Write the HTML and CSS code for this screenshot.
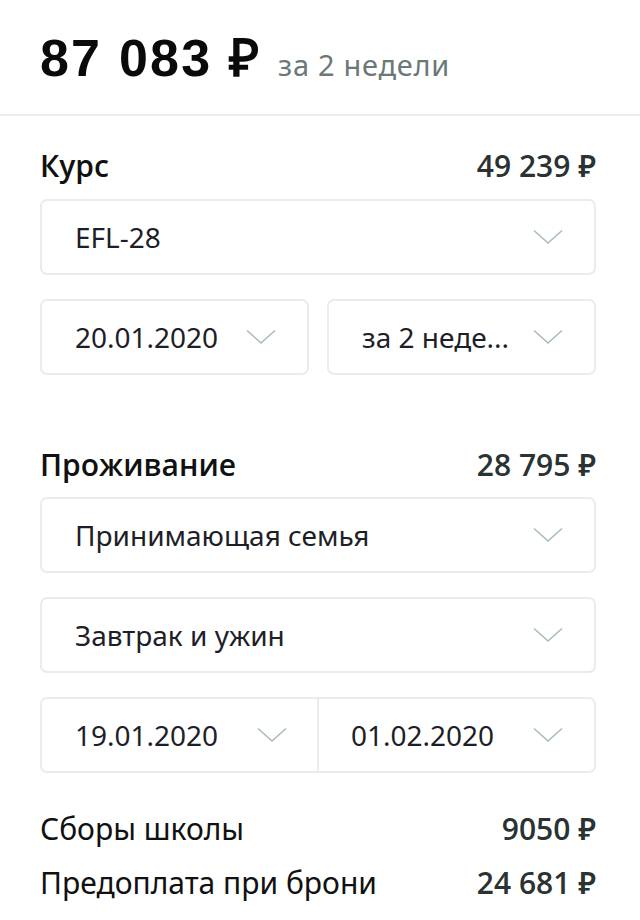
FILE: index.html
```html
<!DOCTYPE html>
<html lang="ru">
<head>
<meta charset="utf-8">
<title>Стоимость</title>
<link rel="stylesheet" href="styles.css">
</head>
<body>
<header class="total">
  <span class="total-sum">87 083 ₽</span>
  <span class="total-period">за 2 недели</span>
</header>
<main class="content">
  <section class="group group-course">
    <div class="group-head">
      <span class="group-title">Курс</span>
      <span class="group-price">49 239 ₽</span>
    </div>
    <div class="select">
      <span class="select-text">EFL-28</span>
      <svg class="chev" viewBox="0 0 30 16"><path d="M1 1.5 L15 14 L29 1.5"/></svg>
    </div>
    <div class="pair">
      <div class="select half">
        <span class="select-text">20.01.2020</span>
        <svg class="chev" viewBox="0 0 30 16"><path d="M1 1.5 L15 14 L29 1.5"/></svg>
      </div>
      <div class="select half">
        <span class="select-text" title="за 2 недели">за 2 неде...</span>
        <svg class="chev" viewBox="0 0 30 16"><path d="M1 1.5 L15 14 L29 1.5"/></svg>
      </div>
    </div>
  </section>

  <section class="group group-stay">
    <div class="group-head">
      <span class="group-title">Проживание</span>
      <span class="group-price">28 795 ₽</span>
    </div>
    <div class="select">
      <span class="select-text">Принимающая семья</span>
      <svg class="chev" viewBox="0 0 30 16"><path d="M1 1.5 L15 14 L29 1.5"/></svg>
    </div>
    <div class="select">
      <span class="select-text">Завтрак и ужин</span>
      <svg class="chev" viewBox="0 0 30 16"><path d="M1 1.5 L15 14 L29 1.5"/></svg>
    </div>
    <div class="select joined">
      <div class="joined-cell">
        <span class="select-text">19.01.2020</span>
        <svg class="chev" viewBox="0 0 30 16"><path d="M1 1.5 L15 14 L29 1.5"/></svg>
      </div>
      <div class="joined-cell second">
        <span class="select-text">01.02.2020</span>
        <svg class="chev" viewBox="0 0 30 16"><path d="M1 1.5 L15 14 L29 1.5"/></svg>
      </div>
    </div>
  </section>

  <section class="fees">
    <div class="fee-row">
      <span class="fee-name">Сборы школы</span>
      <span class="fee-price">9050 ₽</span>
    </div>
    <div class="fee-row">
      <span class="fee-name">Предоплата при брони</span>
      <span class="fee-price">24 681 ₽</span>
    </div>
  </section>
</main>
</body>
</html>
```

FILE: styles.css
```css
* { box-sizing: border-box; }

html, body {
  margin: 0;
  padding: 0;
  background: #ffffff;
}

body {
  font-family: "Noto Sans", "Open Sans", sans-serif;
  color: #1c1c26;
  width: 640px;
  overflow: hidden;
}

.total {
  height: 116px;
  border-bottom: 2px solid #ececec;
  display: flex;
  align-items: baseline;
  padding: 28px 40px 0 40px;
  gap: 17px;
}

.total-sum {
  font-family: "Liberation Sans", Arial, sans-serif;
  font-weight: 700;
  font-size: 52px;
  line-height: 60px;
  color: #0a0a0a;
  letter-spacing: 2.2px;
}

.total-period {
  font-size: 29px;
  color: #6c7878;
  letter-spacing: 0.7px;
}

.content {
  padding: 31px 44px 0 40px;
}

.group-head {
  display: flex;
  justify-content: space-between;
  align-items: center;
  height: 36px;
  margin-bottom: 16px;
}

.group-title {
  font-family: "Open Sans", "Noto Sans", sans-serif;
  font-size: 30px;
  font-weight: 600;
  color: #111111;
}

.group-price {
  font-family: "Open Sans", "Noto Sans", sans-serif;
  font-size: 30px;
  font-weight: 600;
  color: #2a3232;
}

.select {
  height: 76px;
  border: 2px solid #ebebeb;
  border-radius: 7px;
  display: flex;
  align-items: center;
  justify-content: space-between;
  padding: 0 31px 0 33px;
  margin-bottom: 24px;
}

.select-text {
  font-size: 28px;
  color: #1e1e29;
  white-space: nowrap;
  min-width: 0;
}

.chev {
  width: 30px;
  height: 16px;
  flex: none;
  margin-left: 16px;
}

.chev path {
  fill: none;
  stroke: #a8bcbb;
  stroke-width: 1.6;
}

.pair {
  display: grid;
  grid-template-columns: minmax(0, 1fr) minmax(0, 1fr);
  gap: 18px;
}

.pair .select {
  margin-bottom: 0;
  min-width: 0;
}

.half .chev {
  margin-left: 22px;
}

.group-stay {
  margin-top: 71px;
}

.group-stay .group-head {
  margin-bottom: 15px;
}

.joined {
  padding: 0;
  margin-bottom: 0;
}

.joined-cell {
  flex: 1 1 0;
  min-width: 0;
  height: 100%;
  display: flex;
  align-items: center;
  justify-content: space-between;
  padding: 0 30px 0 33px;
}

.joined-cell.second {
  border-left: 2px solid #ebebeb;
  padding: 0 31px 0 32px;
}

.fees {
  margin-top: 28px;
}

.fee-row {
  display: flex;
  justify-content: space-between;
  align-items: center;
  height: 54px;
}

.fee-name {
  font-size: 30px;
  color: #111111;
}

.fee-price {
  font-family: "Open Sans", "Noto Sans", sans-serif;
  font-size: 30px;
  font-weight: 600;
  color: #2a3232;
}
```
